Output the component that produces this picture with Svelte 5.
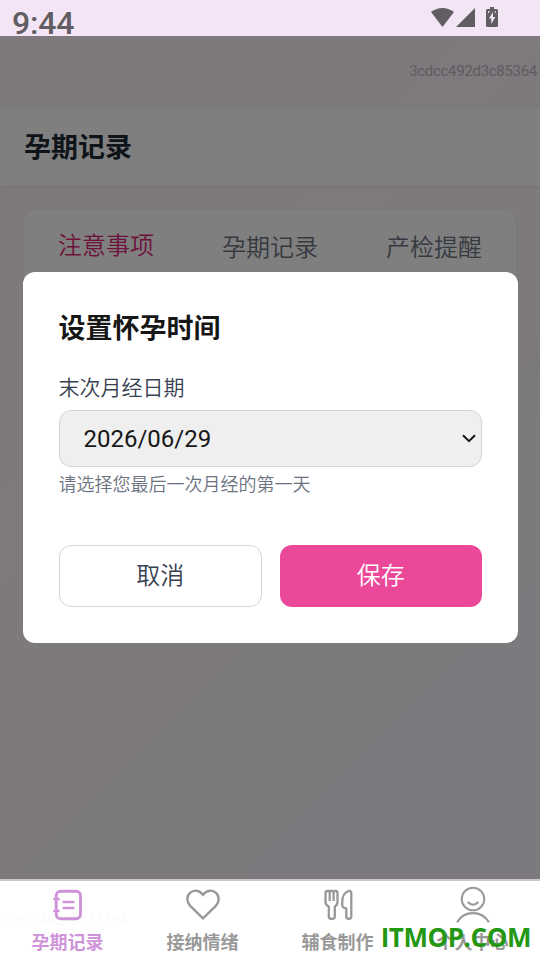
<script>
  const tabs = ['注意事项', '孕期记录', '产检提醒'];
  const nav = ['孕期记录', '接纳情绪', '辅食制作', '个人中心'];
  const deviceId = '3cdcc492d3c85364';
</script>

<div class="screen">
  <header class="status">
    <span class="time">9:44</span>
    <div class="indicators">
      <svg width="23" height="20" viewBox="0 0 23 20"><path d="M0 4Q11.5-4 23 4L11.5 19Z" /></svg>
      <svg width="19" height="19" viewBox="0 0 19 19"><path d="M0 19H19V0Z" /></svg>
      <svg class="battery" width="12" height="20" viewBox="0 0 12 20"><path fill-rule="evenodd" d="M4 0H8V2H10.5Q12 2 12 3.5V18.5Q12 20 10.5 20H1.5Q0 20 0 18.5V3.5Q0 2 1.5 2H4ZM7 5L3 11.5H5.3V17L9.3 10H7ZM2 4V6.5L4 4.5ZM10 4V6.5L8.5 4.5Z" /></svg>
    </div>
  </header>
  <main>
    <div class="spacer"></div>
    <div class="heading"><h1>孕期记录</h1></div>
    <div class="tabs">
      {#each tabs as tab, i}<span class:active={i === 0}>{tab}</span>{/each}
    </div>
    <div class="overlay">
      <section class="dialog">
        <h2>设置怀孕时间</h2>
        <div class="label">末次月经日期</div>
        <div class="select">
          <span>2026/06/29</span>
          <svg width="14" height="9" viewBox="0 0 14 9"><path d="M1 1.2L7 7.2L13 1.2" /></svg>
        </div>
        <p>请选择您最后一次月经的第一天</p>
        <div class="actions">
          <button class="cancel">取消</button>
          <button class="save">保存</button>
        </div>
      </section>
    </div>
    <span class="device top">{deviceId}</span>
  </main>
  <nav>
    {#each nav as item, i}
      <div class="item" class:active={i === 0}>
        <svg width="36" height="40" viewBox="0 0 36 40">
          {#if i === 0}
            <rect x="6.2" y="5.3" width="24.3" height="27.4" rx="4.5" />
            <path d="M13.8 16H23.3M13.8 22H23.3M4.5 13H8.5M4.5 25H8.5" stroke-linecap="round" stroke-width="2.7" />
          {:else if i === 1}
            <path d="M18 32.3L5.2 19.9C1.4 16 1.4 10.4 5 6.9C8.7 3.4 14.3 3.9 18 8.7C21.7 3.9 27.3 3.4 31 6.9C34.6 10.4 34.6 16 30.8 19.9Z" stroke-width="2.4" />
          {:else if i === 2}
            <path d="M7.5 5H15.5Q17.5 5 17.5 7V16Q17.5 19 14.8 20.5V30.5Q14.8 32.8 12.5 32.8H11Q8.8 32.8 8.8 30.5V20.5Q5.5 19 5.5 16V7Q5.5 5 7.5 5ZM9.7 5V15M13.6 5V15M31.3 30.5Q31.3 32.8 29 32.8H28.5Q26.3 32.8 26.3 30.5V22.5Q22.2 22 22.2 18.5V16Q22.2 7.5 28.5 5Q31.3 4.5 31.3 7.5Z" stroke-width="2.3" stroke-linejoin="round" />
          {:else}
            <circle cx="18" cy="13" r="11.3" stroke-width="2" /><path d="M12.7 16Q18 21.5 23.3 16M2 36.3C9 24 27 24 34 36.3" stroke-width="2.1" />
          {/if}
        </svg>
        <span>{item}</span>
      </div>
    {/each}
    <span class="device bottom">{deviceId}</span>
    <span class="brand">ITMOP.COM</span>
  </nav>
</div>

<style>
  .screen { width: 540px; height: 960px; display: flex; flex-direction: column; overflow: hidden; font-family: Roboto, "Noto Sans CJK SC", sans-serif; }
  .status { height: 36px; flex: none; background: #f3e5f5; display: flex; justify-content: space-between; padding: 0 42px 0 12px; box-sizing: border-box; color: #625c63; }
  .time { font-size: 32px; line-height: 26px; margin-top: 10px; font-weight: 500; letter-spacing: -0.2px; }
  .indicators { display: flex; align-items: flex-start; padding-top: 8px; gap: 2px; fill: #625c63; }
  .battery { margin: -1px 0 0 9px; }
  main { height: 843px; flex: none; position: relative; background: linear-gradient(135deg, #fdf2f8, #f8f5fc); }
  .spacer { height: 72px; }
  .heading { height: 78px; background: #fff; box-shadow: 0 1px 3px #0001; padding: 1px 24px 0; box-sizing: border-box; display: flex; align-items: center; }
  h1, h2 { margin: 0; font-size: 27px; font-weight: 600; line-height: 40px; }
  h1 { color: #1f2937; }
  .tabs { margin: 24px 24px 0; height: 100px; background: #fff; border-radius: 12px; display: flex; box-shadow: 0 1px 3px #0001; }
  .tabs span { flex: 1; text-align: center; font-size: 24px; line-height: 36px; padding-top: 20px; color: #6b7280; font-weight: 350; }
  .tabs .active { color: #db2777; padding-top: 18px; }
  .overlay { position: absolute; inset: 0; background: #00000080; display: flex; align-items: center; justify-content: center; }
  .dialog { width: 495px; height: 371px; box-sizing: border-box; background: #fff; border-radius: 12px; padding: 37px 36px 36px; color: #171717; }
  .label { margin-top: 24px; font-size: 21px; line-height: 30px; color: #374151; font-weight: 350; }
  .select { height: 57px; box-sizing: border-box; margin-top: 7px; border: 1px solid #d1d5db; border-radius: 12px; background: #efefef; display: flex; align-items: center; justify-content: space-between; padding: 0 5px 0 24px; font-size: 24px; }
  .select svg { fill: none; stroke: #171717; stroke-width: 2; }
  p { margin: 5px 0 0; font-size: 18px; line-height: 26px; color: #6b7280; font-weight: 350; }
  .actions { display: flex; gap: 18px; margin-top: 47px; }
  button { flex: 1; height: 62px; border-radius: 12px; border: 0; font: 350 24px Roboto, "Noto Sans CJK SC", sans-serif; padding: 0 0 5px; }
  .cancel { background: #fff; color: #374151; border: 1px solid #d1d5db; }
  .save { background: #ec4899; color: #fff; }
  nav { height: 81px; box-sizing: border-box; border-top: 2px solid #cbc7cb; background: #fff; display: flex; position: relative; color: #999; }
  .item { flex: 1; display: flex; flex-direction: column; align-items: center; font-size: 18px; line-height: 26px; font-weight: 600; padding-top: 5px; }
  .item svg { fill: none; stroke: currentColor; stroke-width: 2.9; }
  .item span { margin-top: 4px; }
  .item.active { color: #ce93d8; }
  .device { position: absolute; font-size: 15px; line-height: 18px; white-space: nowrap; letter-spacing: -0.3px; }
  .top { right: 3px; top: 26px; color: #5f5b5f; }
  .bottom { left: 0; top: 30px; color: #00000009; }
  .brand { position: absolute; right: 9px; top: 38px; font: 700 26px/36px "Open Sans", sans-serif; letter-spacing: -0.45px; color: #249713; }
</style>
